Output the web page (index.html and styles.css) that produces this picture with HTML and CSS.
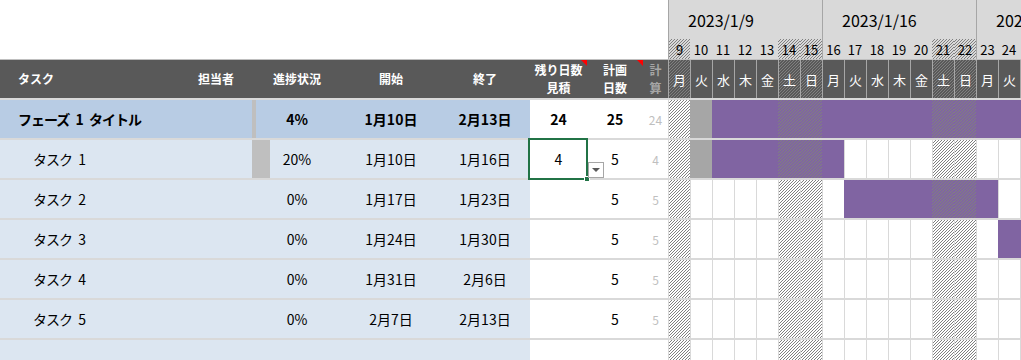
FILE: index.html
```html
<!DOCTYPE html>
<html lang="ja">
<head>
<meta charset="utf-8">
<title>ガントチャート</title>
<link rel="stylesheet" href="styles.css">
</head>
<body>
<div class="sheet">
  <div class="top">
    <div class="top-left"></div>
    <div class="timeline">
      <div class="weeks">
        <div class="week">2023/1/9</div>
        <div class="week">2023/1/16</div>
        <div class="week last">2023/1/23</div>
      </div>
      <div class="daynums">
        <div class="dn wk h">9</div><div class="dn">10</div><div class="dn">11</div><div class="dn">12</div><div class="dn">13</div><div class="dn h">14</div><div class="dn h">15</div>
        <div class="dn wk">16</div><div class="dn">17</div><div class="dn">18</div><div class="dn">19</div><div class="dn">20</div><div class="dn h">21</div><div class="dn h">22</div>
        <div class="dn wk">23</div><div class="dn">24</div><div class="dn">25</div>
      </div>
    </div>
  </div>

  <div class="row head">
    <div class="info">
      <div class="c c-task">タスク</div>
      <div class="c c-owner">担当者</div>
      <div class="c c-prog">進捗状況</div>
      <div class="c c-start">開始</div>
      <div class="c c-end">終了</div>
    </div>
    <div class="est">
      <div class="c c-rem note">残り日数<br>見積</div>
      <div class="c c-plan note">計画<br>日数</div>
      <div class="c c-calc">計<br>算</div>
    </div>
    <div class="days">
      <div class="d h">月</div><div class="d">火</div><div class="d">水</div><div class="d">木</div><div class="d">金</div><div class="d h">土</div><div class="d h">日</div>
      <div class="d">月</div><div class="d">火</div><div class="d">水</div><div class="d">木</div><div class="d">金</div><div class="d h">土</div><div class="d h">日</div>
      <div class="d">月</div><div class="d">火</div><div class="d">水</div>
    </div>
  </div>

  <div class="row phase">
    <div class="info">
      <div class="c c-task">フェーズ 1 タイトル</div>
      <div class="c c-owner"></div>
      <div class="c c-prog databar" style="--p:4%">4%</div>
      <div class="c c-start">1月10日</div>
      <div class="c c-end">2月13日</div>
    </div>
    <div class="est">
      <div class="c c-rem">24</div>
      <div class="c c-plan">25</div>
      <div class="c c-calc">24</div>
    </div>
    <div class="days">
      <div class="d h"></div><div class="d g"></div><div class="d p"></div><div class="d p"></div><div class="d p"></div><div class="d p h"></div><div class="d p h"></div>
      <div class="d p"></div><div class="d p"></div><div class="d p"></div><div class="d p"></div><div class="d p"></div><div class="d p h"></div><div class="d p h"></div>
      <div class="d p"></div><div class="d p"></div><div class="d p"></div>
    </div>
  </div>

  <div class="row task">
    <div class="info">
      <div class="c c-task">タスク 1</div>
      <div class="c c-owner"></div>
      <div class="c c-prog databar" style="--p:20%">20%</div>
      <div class="c c-start">1月10日</div>
      <div class="c c-end">1月16日</div>
    </div>
    <div class="est">
      <div class="c c-rem selected">4<span class="sel"><span class="handle"></span></span><span class="dropdown"><span class="caret"></span></span></div>
      <div class="c c-plan">5</div>
      <div class="c c-calc">4</div>
    </div>
    <div class="days">
      <div class="d h"></div><div class="d g"></div><div class="d p"></div><div class="d p"></div><div class="d p"></div><div class="d p h"></div><div class="d p h"></div>
      <div class="d p"></div><div class="d"></div><div class="d"></div><div class="d"></div><div class="d"></div><div class="d h"></div><div class="d h"></div>
      <div class="d"></div><div class="d"></div><div class="d"></div>
    </div>
  </div>

  <div class="row task">
    <div class="info">
      <div class="c c-task">タスク 2</div>
      <div class="c c-owner"></div>
      <div class="c c-prog">0%</div>
      <div class="c c-start">1月17日</div>
      <div class="c c-end">1月23日</div>
    </div>
    <div class="est">
      <div class="c c-rem"></div>
      <div class="c c-plan">5</div>
      <div class="c c-calc">5</div>
    </div>
    <div class="days">
      <div class="d h"></div><div class="d"></div><div class="d"></div><div class="d"></div><div class="d"></div><div class="d h"></div><div class="d h"></div>
      <div class="d"></div><div class="d p"></div><div class="d p"></div><div class="d p"></div><div class="d p"></div><div class="d p h"></div><div class="d p h"></div>
      <div class="d p"></div><div class="d"></div><div class="d"></div>
    </div>
  </div>

  <div class="row task">
    <div class="info">
      <div class="c c-task">タスク 3</div>
      <div class="c c-owner"></div>
      <div class="c c-prog">0%</div>
      <div class="c c-start">1月24日</div>
      <div class="c c-end">1月30日</div>
    </div>
    <div class="est">
      <div class="c c-rem"></div>
      <div class="c c-plan">5</div>
      <div class="c c-calc">5</div>
    </div>
    <div class="days">
      <div class="d h"></div><div class="d"></div><div class="d"></div><div class="d"></div><div class="d"></div><div class="d h"></div><div class="d h"></div>
      <div class="d"></div><div class="d"></div><div class="d"></div><div class="d"></div><div class="d"></div><div class="d h"></div><div class="d h"></div>
      <div class="d"></div><div class="d p"></div><div class="d p"></div>
    </div>
  </div>

  <div class="row task">
    <div class="info">
      <div class="c c-task">タスク 4</div>
      <div class="c c-owner"></div>
      <div class="c c-prog">0%</div>
      <div class="c c-start">1月31日</div>
      <div class="c c-end">2月6日</div>
    </div>
    <div class="est">
      <div class="c c-rem"></div>
      <div class="c c-plan">5</div>
      <div class="c c-calc">5</div>
    </div>
    <div class="days">
      <div class="d h"></div><div class="d"></div><div class="d"></div><div class="d"></div><div class="d"></div><div class="d h"></div><div class="d h"></div>
      <div class="d"></div><div class="d"></div><div class="d"></div><div class="d"></div><div class="d"></div><div class="d h"></div><div class="d h"></div>
      <div class="d"></div><div class="d"></div><div class="d"></div>
    </div>
  </div>

  <div class="row task">
    <div class="info">
      <div class="c c-task">タスク 5</div>
      <div class="c c-owner"></div>
      <div class="c c-prog">0%</div>
      <div class="c c-start">2月7日</div>
      <div class="c c-end">2月13日</div>
    </div>
    <div class="est">
      <div class="c c-rem"></div>
      <div class="c c-plan">5</div>
      <div class="c c-calc">5</div>
    </div>
    <div class="days">
      <div class="d h"></div><div class="d"></div><div class="d"></div><div class="d"></div><div class="d"></div><div class="d h"></div><div class="d h"></div>
      <div class="d"></div><div class="d"></div><div class="d"></div><div class="d"></div><div class="d"></div><div class="d h"></div><div class="d h"></div>
      <div class="d"></div><div class="d"></div><div class="d"></div>
    </div>
  </div>

  <div class="row task">
    <div class="info">
      <div class="c c-task"></div>
      <div class="c c-owner"></div>
      <div class="c c-prog"></div>
      <div class="c c-start"></div>
      <div class="c c-end"></div>
    </div>
    <div class="est">
      <div class="c c-rem"></div>
      <div class="c c-plan"></div>
      <div class="c c-calc"></div>
    </div>
    <div class="days">
      <div class="d h"></div><div class="d"></div><div class="d"></div><div class="d"></div><div class="d"></div><div class="d h"></div><div class="d h"></div>
      <div class="d"></div><div class="d"></div><div class="d"></div><div class="d"></div><div class="d"></div><div class="d h"></div><div class="d h"></div>
      <div class="d"></div><div class="d"></div><div class="d"></div>
    </div>
  </div>
</div>
</body>
</html>
```

FILE: styles.css
```css
* {
  box-sizing: border-box;
  margin: 0;
  padding: 0;
}

html, body {
  background: #ffffff;
}

body {
  margin: 0;
  width: 1021px;
  height: 360px;
  overflow: hidden;
  font-family: "Noto Sans CJK JP", "Noto Sans", sans-serif;
  color: #000000;
}

.sheet {
  width: 1021px;
}

/* ---------- timeline header (top area) ---------- */
.top {
  display: flex;
  height: 59px;
}

.top-left {
  width: 668px;
  flex: none;
}

.timeline {
  width: 353px;
  flex: none;
  background: #d9d9d9;
  display: flex;
  flex-direction: column;
  overflow: hidden;
}

.weeks {
  display: flex;
  height: 39px;
}

.week {
  flex: none;
  width: 154px;
  border-left: 1px solid #a6a6a6;
  padding-left: 19px;
  font-size: 16px;
  line-height: 41px;
  white-space: nowrap;
  overflow: hidden;
  color: #000;
}

.week.last {
  width: 45px;
}

.daynums {
  display: flex;
  height: 20px;
}

.dn {
  flex: none;
  width: 22px;
  text-align: center;
  font-size: 13px;
  line-height: 21px;
}

.dn.wk {
  border-left: 1px solid #a6a6a6;
}

/* hatched holiday pattern: thin "/" lines, 3px period */
.h {
  background-image: linear-gradient(to bottom right, transparent 38%, #808080 38%, #808080 62%, transparent 62%);
  background-size: 3px 3px;
}

/* ---------- rows ---------- */
.row {
  display: flex;
  height: 40px;
  border-bottom: 2px solid #d9d9d9;
}

.info,
.est {
  display: flex;
  flex: none;
}

.c {
  flex: none;
  display: flex;
  align-items: center;
  justify-content: center;
  text-align: center;
  font-size: 14px;
}

.c-task {
  width: 180px;
  justify-content: flex-start;
  padding-left: 18px;
  letter-spacing: -1px;
  word-spacing: 4px;
  white-space: pre;
}

.c-owner { width: 72px; }
.c-prog  { width: 90px; }
.c-start { width: 98px; }
.c-end   { width: 90px; }
.c-rem   { width: 57px; position: relative; }
.c-plan  { width: 56px; position: relative; }
.c-calc  { width: 25px; font-size: 12px; color: #bfbfbf; }

.databar {
  background-image: linear-gradient(to right, #bfbfbf var(--p), transparent var(--p));
}

.days {
  display: flex;
  flex: none;
  width: 353px;
  overflow: hidden;
}

.d {
  flex: none;
  width: 22px;
  border-left: 1px solid #d9d9d9;
  background-color: #ffffff;
}

.d.g {
  background-color: #a6a6a6;
  border-left-color: transparent;
}

.d.p {
  background-color: #8064a2;
  border-left-color: transparent;
}

/* ---------- header row ---------- */
.row.head {
  height: 41px;
  border-top: 1px solid #bfbfbf;
  background: #595959;
}

.head .c {
  color: #ffffff;
  font-size: 12px;
  font-weight: bold;
  line-height: 18px;
}

.head .c-task {
  letter-spacing: 0;
}

.head .c-calc {
  color: #a6a6a6;
}

.head .note::after {
  content: "";
  position: absolute;
  top: 0;
  right: 0;
  border-top: 6px solid #ff0000;
  border-left: 6px solid transparent;
}

.head .d {
  background-color: #595959;
  border-left: 1px solid #a6a6a6;
  color: #ffffff;
  font-size: 13px;
  display: flex;
  align-items: center;
  justify-content: center;
}

/* ---------- phase row ---------- */
.phase .info {
  background: #b8cce4;
}

.phase .c {
  font-weight: bold;
}

.phase .c-calc {
  font-weight: normal;
}

/* ---------- task rows ---------- */
.task .info {
  background: #dce6f1;
}

.task .c-task {
  padding-left: 33px;
}

/* ---------- selected cell ---------- */
.sel {
  position: absolute;
  top: -2px;
  left: -2px;
  right: -1px;
  bottom: -2px;
  border: 2px solid #217346;
}

.handle {
  position: absolute;
  right: -4px;
  bottom: -4px;
  width: 6px;
  height: 6px;
  background: #217346;
  border: 1px solid #ffffff;
}

.dropdown {
  position: absolute;
  left: 58px;
  top: 22px;
  width: 16px;
  height: 16px;
  background: #ffffff;
  border: 1px solid #a6a6a6;
  display: flex;
  align-items: center;
  justify-content: center;
  z-index: 2;
}

.caret {
  width: 0;
  height: 0;
  border-left: 4px solid transparent;
  border-right: 4px solid transparent;
  border-top: 4px solid #595959;
}
```
